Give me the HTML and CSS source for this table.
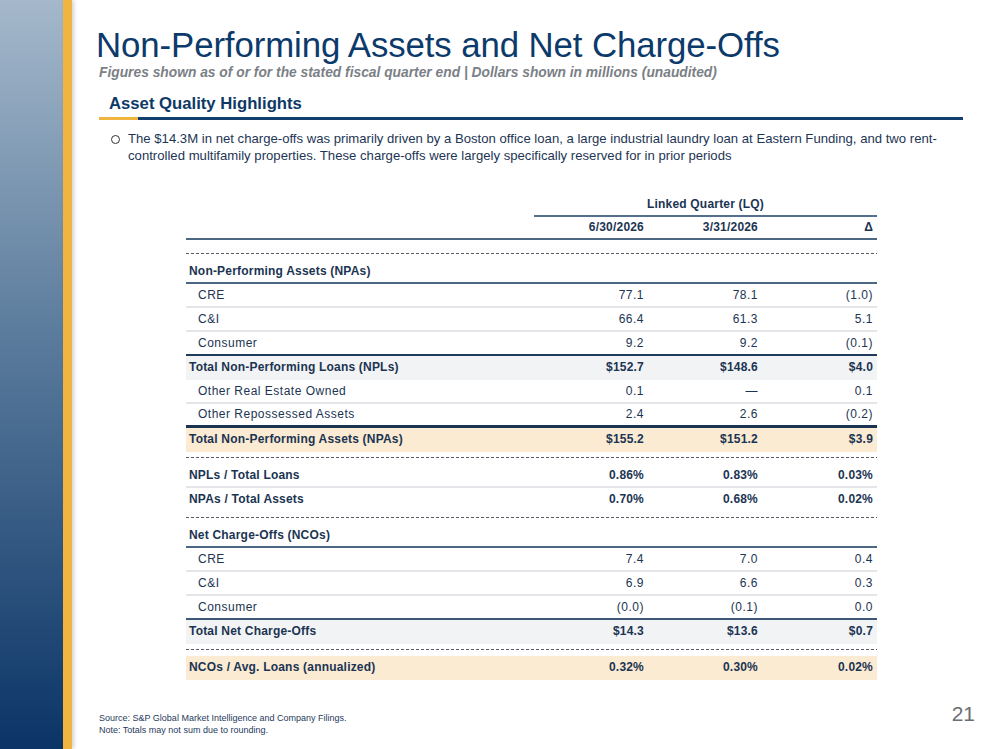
FILE: index.html
```html
<!DOCTYPE html>
<html lang="en">
<head>
<meta charset="utf-8">
<title>Non-Performing Assets and Net Charge-Offs</title>
<link rel="stylesheet" href="styles.css">
</head>
<body>
<div class="slide">
  <div class="side"></div>
  <div class="gold"></div>
  <main class="main">
    <h1 class="title">Non-Performing Assets and Net Charge-Offs</h1>
    <p class="subtitle">Figures shown as of or for the stated fiscal quarter end | Dollars shown in millions (unaudited)</p>
    <h2 class="section">Asset Quality Highlights</h2>
    <div class="rule"><span class="rule-gold"></span><span class="rule-blue"></span></div>
    <div class="bullet">
      <span class="dot"></span>
      <p class="bullet-text">The $14.3M in net charge-offs was primarily driven by a Boston office loan, a large industrial laundry loan at Eastern Funding, and two rent-controlled multifamily properties. These charge-offs were largely specifically reserved for in prior periods</p>
    </div>

    <div class="table">
      <div class="row lq"><div></div><div class="lq-label">Linked Quarter (LQ)</div></div>
      <div class="row head"><div></div><div class="num">6/30/2026</div><div class="num">3/31/2026</div><div class="num">Δ</div></div>
      <div class="sep sep-first"><span class="dash"></span></div>

      <div class="row sect line-mid"><div class="lbl">Non-Performing Assets (NPAs)</div><div></div><div></div><div></div></div>
      <div class="row line-light"><div class="lbl ind">CRE</div><div class="num">77.1</div><div class="num">78.1</div><div class="num">(1.0)</div></div>
      <div class="row line-light"><div class="lbl ind">C&amp;I</div><div class="num">66.4</div><div class="num">61.3</div><div class="num">5.1</div></div>
      <div class="row line-dark"><div class="lbl ind">Consumer</div><div class="num">9.2</div><div class="num">9.2</div><div class="num">(0.1)</div></div>
      <div class="row total gray"><div class="lbl">Total Non-Performing Loans (NPLs)</div><div class="num">$152.7</div><div class="num">$148.6</div><div class="num">$4.0</div></div>
      <div class="row line-light"><div class="lbl ind">Other Real Estate Owned</div><div class="num">0.1</div><div class="num">—</div><div class="num">0.1</div></div>
      <div class="row line-heavy"><div class="lbl ind">Other Repossessed Assets</div><div class="num">2.4</div><div class="num">2.6</div><div class="num">(0.2)</div></div>
      <div class="row total tan"><div class="lbl">Total Non-Performing Assets (NPAs)</div><div class="num">$155.2</div><div class="num">$151.2</div><div class="num">$3.9</div></div>
      <div class="sep"><span class="dash"></span></div>

      <div class="row total line-light"><div class="lbl">NPLs / Total Loans</div><div class="num">0.86%</div><div class="num">0.83%</div><div class="num">0.03%</div></div>
      <div class="row total"><div class="lbl">NPAs / Total Assets</div><div class="num">0.70%</div><div class="num">0.68%</div><div class="num">0.02%</div></div>
      <div class="sep"><span class="dash"></span></div>

      <div class="row sect line-mid"><div class="lbl">Net Charge-Offs (NCOs)</div><div></div><div></div><div></div></div>
      <div class="row line-light"><div class="lbl ind">CRE</div><div class="num">7.4</div><div class="num">7.0</div><div class="num">0.4</div></div>
      <div class="row line-light"><div class="lbl ind">C&amp;I</div><div class="num">6.9</div><div class="num">6.6</div><div class="num">0.3</div></div>
      <div class="row line-dark2"><div class="lbl ind">Consumer</div><div class="num">(0.0)</div><div class="num">(0.1)</div><div class="num">0.0</div></div>
      <div class="row total gray"><div class="lbl">Total Net Charge-Offs</div><div class="num">$14.3</div><div class="num">$13.6</div><div class="num">$0.7</div></div>
      <div class="sep"><span class="dash"></span></div>
      <div class="row total tan"><div class="lbl">NCOs / Avg. Loans (annualized)</div><div class="num">0.32%</div><div class="num">0.30%</div><div class="num">0.02%</div></div>
    </div>

    <footer class="footer">
      <div class="notes">
        <p>Source: S&amp;P Global Market Intelligence and Company Filings.</p>
        <p>Note: Totals may not sum due to rounding.</p>
      </div>
      <div class="page">21</div>
    </footer>
  </main>
</div>
</body>
</html>
```

FILE: styles.css
```css
* { box-sizing: border-box; }
html, body { margin: 0; padding: 0; }
body {
  font-family: "Liberation Sans", Arial, sans-serif;
  background: #ffffff;
  width: 999px;
  height: 749px;
  overflow: hidden;
}
.slide {
  display: flex;
  width: 999px;
  height: 749px;
}
.side {
  width: 63px;
  flex: none;
  background: linear-gradient(to bottom, #a5b8cb 0%, #5a7b9c 45%, #0b3466 100%);
}
.gold {
  width: 9px;
  flex: none;
  background: #f0b53f;
  box-shadow: 2px 0 4px rgba(0, 0, 0, 0.18);
  position: relative;
  z-index: 1;
}
.main {
  flex: 1;
  padding: 25px 24px 0 24px;
  display: flex;
  flex-direction: column;
}
.title {
  margin: 0;
  font-weight: normal;
  font-size: 34.8px;
  line-height: 40px;
  color: #0c3a6b;
  letter-spacing: -0.1px;
}
.subtitle {
  margin: 0 0 0 3px;
  font-size: 13.8px;
  line-height: 16px;
  font-weight: bold;
  font-style: italic;
  color: #7b7f86;
}
.section {
  margin: 13px 0 0 13px;
  font-size: 16.7px;
  line-height: 20px;
  font-weight: bold;
  color: #0e3966;
}
.rule {
  display: flex;
  margin: 3px 0 0 3px;
  width: 864px;
  height: 3px;
}
.rule-gold { width: 39px; background: #f0b53f; }
.rule-blue { flex: 1; background: #12406e; }

.bullet {
  display: flex;
  margin: 10px 0 0 15px;
  width: 850px;
}
.dot {
  flex: none;
  width: 9px;
  height: 9px;
  border: 1.3px solid #333;
  border-radius: 50%;
  margin-top: 5px;
  margin-right: 8px;
}
.bullet-text {
  margin: 0;
  font-size: 13.15px;
  line-height: 17px;
  color: #1d3555;
}

.table {
  margin: 29px 0 0 90px;
  width: 691px;
  color: #1b3452;
  font-size: 12px;
}
.row {
  display: grid;
  grid-template-columns: 348px 114px 114px 115px;
  height: 24px;
  line-height: 22px;
  letter-spacing: 0.5px;
}
.num { text-align: right; padding-right: 4px; }
.lbl { padding-left: 3px; }
.lbl.ind { padding-left: 12px; }
.lq, .head, .sect, .total { font-weight: bold; letter-spacing: 0.2px; }
.lq { height: 24px; }
.lq-label {
  grid-column: 2 / 5;
  text-align: center;
  border-bottom: 2px solid #55708e;
}
.head {
  height: 23px;
  line-height: 21px;
  border-bottom: 2px solid #4d6783;
}
.line-light { border-bottom: 2px solid #e3e5e8; }
.line-mid { border-bottom: 2px solid #4d6783; }
.line-dark { border-bottom: 2px solid #1f3a5a; }
.line-dark2 { border-bottom: 2px solid #3e5875; }
.line-heavy { border-bottom: 3px solid #1a3350; line-height: 21px; }
.gray { background: #f2f3f5; }
.tan { background: #faebd2; }
.sep {
  padding: 5px 0 6px 0;
  height: 12px;
}
.sep-first { padding-top: 13px; height: 20px; }
.dash {
  display: block;
  height: 1px;
  background: repeating-linear-gradient(to right, #555c66 0 3px, transparent 3px 5px);
}

.footer {
  margin-top: 32px;
  display: flex;
  justify-content: space-between;
  align-items: flex-start;
}
.notes { margin-left: 3px; }
.notes p {
  margin: 0;
  font-size: 9px;
  line-height: 12px;
  color: #1f3a5c;
}
.page {
  margin-top: -9px;
  font-size: 21px;
  line-height: 21px;
  color: #6b6e72;
}
```
